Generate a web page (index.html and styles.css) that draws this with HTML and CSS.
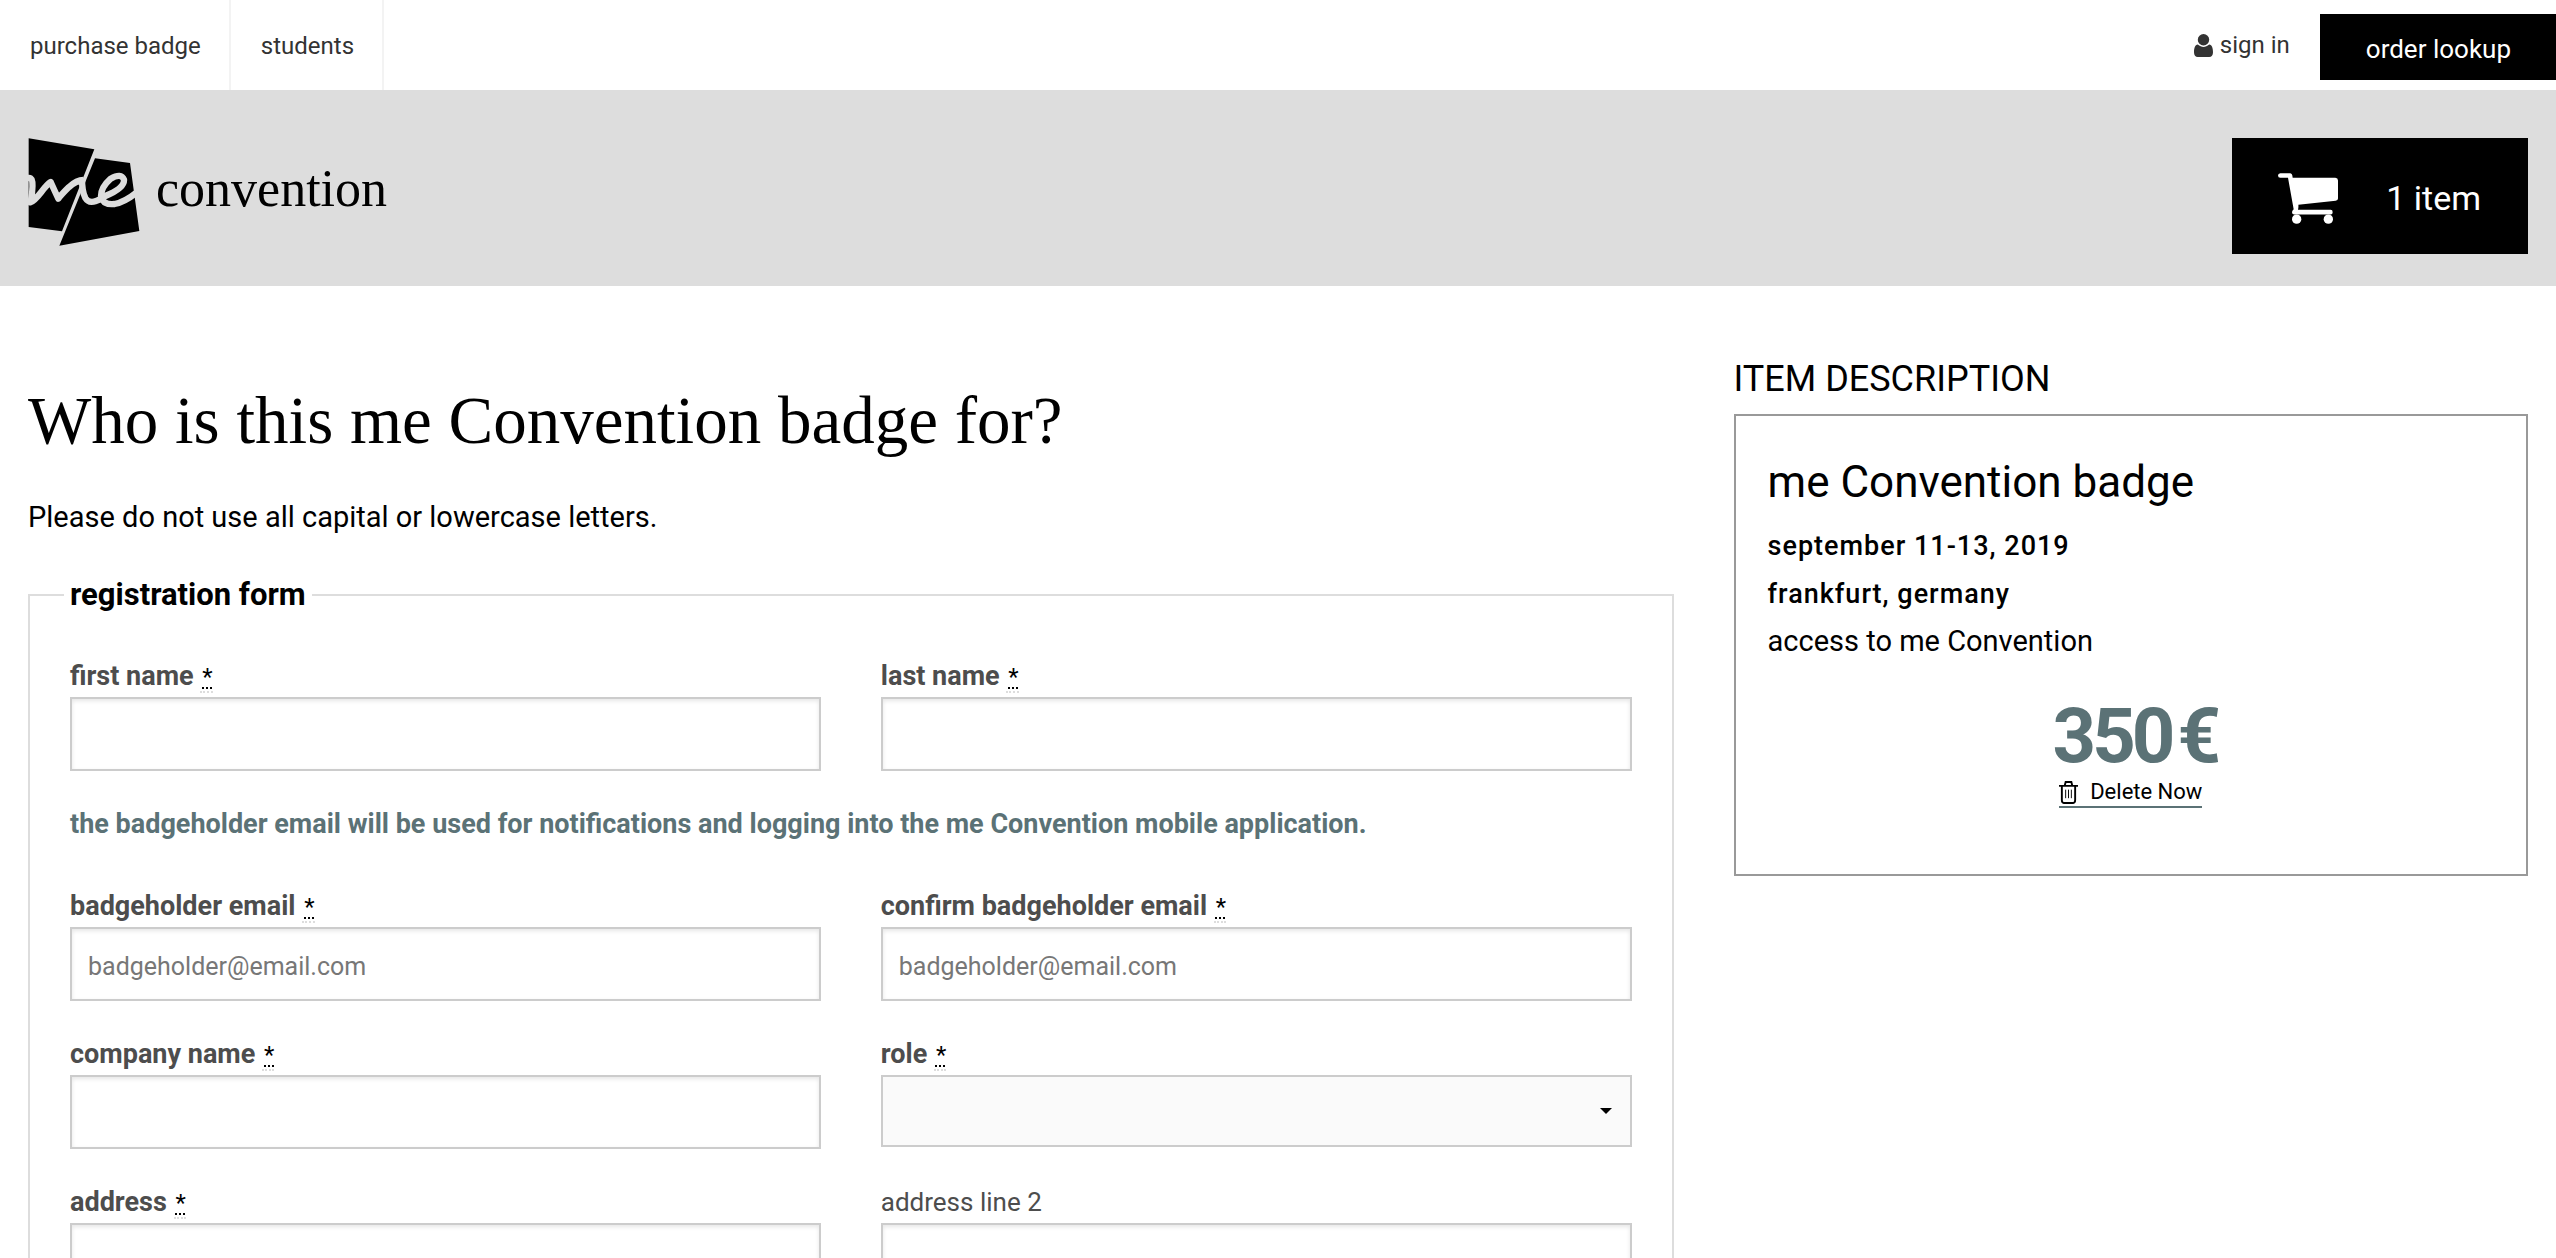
FILE: index.html
```html
<!DOCTYPE html>
<html lang="en">
<head>
<meta charset="utf-8">
<meta name="viewport" content="width=device-width, initial-scale=1">
<title>me Convention registration</title>
<link rel="stylesheet" href="styles.css">
</head>
<body>
<nav class="topbar">
  <div class="topbar-links">
    <a class="topbar-link" href="#">purchase badge</a>
    <a class="topbar-link" href="#">students</a>
  </div>
  <div class="topbar-account">
    <a class="sign-in" href="#">
      <svg class="user-icon" viewBox="0 0 20 24" aria-hidden="true"><circle cx="10" cy="6" r="6"/><path d="M4 11C8 14.500 12 14.500 16 11C19 11.500 20 15 20 19C20 22 18.500 24 16 24H4C1.500 24 0 22 0 19C0 15 1 11.500 4 11Z"/></svg>
      sign in</a>
    <a class="order-lookup" href="#">order lookup</a>
  </div>
</nav>
<header class="masthead">
  <a class="brand" href="#">
    <svg class="brand-mark" viewBox="0 0 336 324" role="img" aria-label="me">
      <path d="M2 1L199 34L102 280L2 267Z M201 61L306 75L334 279L94 323Z"/>
      <path class="brand-script" d="M-4 121Q12 116 13 132Q15 165 7 193Q20 188 40 162Q58 138 68 132Q76 150 91 182Q98 172 122 148Q146 126 166 126M162 122Q162 160 172 180Q182 197 204 189Q220 184 232 174Q290 150 288 125Q280 104 248 122Q219 148 219 174Q224 202 260 198Q290 192 324 165"/>
    </svg>
    <span class="brand-name">convention</span>
  </a>
  <a class="cart" href="#">
    <svg class="cart-icon" viewBox="0 0 180 152" aria-hidden="true"><path d="M7 0H37Q42 1 43 7L44 14H172Q180 15 180 22V76Q180 82 173 83L61 95Q62 100 60 110H158Q164 110 164 117Q164 124 158 124H49Q42 124 42 117Q42 112 47 108L30 14H7Q0 14 0 7Q0 1 7 0Z"/><circle cx="56" cy="138" r="14"/><circle cx="151" cy="138" r="14"/></svg>
    <span>1 item</span>
  </a>
</header>
<div class="layout">
  <main>
    <h1>Who is this me Convention badge for?</h1>
    <p class="intro">Please do not use all capital or lowercase letters.</p>
    <form>
      <fieldset class="registration">
        <legend>registration form</legend>
        <div class="field">
          <label for="first">first name <abbr title="required">*</abbr></label>
          <input id="first" type="text">
        </div>
        <div class="field">
          <label for="last">last name <abbr title="required">*</abbr></label>
          <input id="last" type="text">
        </div>
        <p class="notice">the badgeholder email will be used for notifications and logging into the me Convention mobile application.</p>
        <div class="field">
          <label for="email">badgeholder email <abbr title="required">*</abbr></label>
          <input id="email" type="email" placeholder="badgeholder@email.com">
        </div>
        <div class="field">
          <label for="confirm">confirm badgeholder email <abbr title="required">*</abbr></label>
          <input id="confirm" type="email" placeholder="badgeholder@email.com">
        </div>
        <div class="field">
          <label for="company">company name <abbr title="required">*</abbr></label>
          <input id="company" type="text">
        </div>
        <div class="field">
          <label for="role">role <abbr title="required">*</abbr></label>
          <select id="role"><option></option></select>
        </div>
        <div class="field">
          <label for="address">address <abbr title="required">*</abbr></label>
          <input id="address" type="text">
        </div>
        <div class="field">
          <label class="optional" for="address2">address line 2</label>
          <input id="address2" type="text">
        </div>
      </fieldset>
    </form>
  </main>
  <aside>
    <h2>ITEM DESCRIPTION</h2>
    <section class="item">
      <h3>me Convention badge</h3>
      <p class="item-meta">september 11-13, 2019</p>
      <p class="item-meta">frankfurt, germany</p>
      <p class="item-access">access to me Convention</p>
      <div class="item-total">
        <p class="price">350<span class="currency">€</span></p>
        <button class="delete" type="button">
          <svg class="trash-icon" viewBox="0 0 20 24" aria-hidden="true"><path d="M0 5H20M6 5L7 1H13L14 5M3 5V20Q3 23 5 23H15Q17 23 17 20V5"/><path class="trash-bars" d="M7 9V18M10 9V18M13 9V18"/></svg>
          Delete Now</button>
      </div>
    </section>
  </aside>
</div>
</body>
</html>
```
FILE: styles.css
```css
* { box-sizing: border-box; }

body {
  margin: 0;
  background: #fff;
  color: #000;
  font-family: Roboto, "Liberation Sans", sans-serif;
  font-size: 27px;
}

h1, h2, h3, p { margin: 0; }
a { color: inherit; text-decoration: none; }

.topbar {
  display: flex;
  justify-content: space-between;
  height: 90px;
  color: #333;
  font-size: 24px;
}

.topbar-links, .topbar-account { display: flex; }

.topbar-link {
  padding: 0 28px 0 30px;
  border-right: 2px solid #f3f3f3;
  line-height: 92px;
}

.sign-in {
  display: flex;
  align-items: center;
  gap: 7px;
  padding: 0 30px;
}

.user-icon { width: 19px; height: 23px; fill: #333; }

.order-lookup {
  margin: 14px 0 10px;
  padding: 0 45px 0 46px;
  background: #000;
  color: #fff;
  font-size: 26px;
  line-height: 70px;
  height: 66px;
}

.masthead {
  display: flex;
  justify-content: space-between;
  align-items: flex-start;
  height: 196px;
  padding: 48px 28px;
  background: #ddd;
}

.brand { display: flex; gap: 16px; }
.brand-mark { width: 112px; height: 108px; }

.brand-script {
  fill: none;
  stroke: #ddd;
  stroke-width: 19px;
  stroke-linejoin: round;
}

.brand-name {
  font-family: "Liberation Serif", serif;
  font-size: 52px;
  line-height: 102px;
}

.cart {
  display: flex;
  align-items: center;
  gap: 48px;
  height: 116px;
  padding: 4px 47px 0 46px;
  background: #000;
  color: #fff;
  font-size: 34px;
}

.cart-icon { width: 60px; height: 51px; fill: #fff; }

.layout {
  display: grid;
  grid-template-columns: 29fr 14fr;
  gap: 60px;
  padding: 0 28px;
}

h1 {
  margin-top: 84px;
  font-family: "Liberation Serif", serif;
  font-size: 67px;
  font-weight: 400;
  line-height: 100px;
}

.intro {
  margin-top: 27px;
  font-size: 29px;
  line-height: 40px;
}

.registration {
  display: grid;
  grid-template-columns: 1fr 1fr;
  column-gap: 60px;
  row-gap: 32px;
  margin: 38px 0 60px;
  padding: 40px 40px 60px;
  border: 2px solid #ddd;
}

legend {
  margin-left: -6px;
  padding: 0 6px;
  font-size: 31px;
  font-weight: 700;
  line-height: 40px;
}

.field { display: flex; flex-direction: column; }

label {
  color: #4d4d4d;
  font-weight: 700;
  line-height: 42px;
}

label.optional { font-size: 26px; font-weight: 400; }

abbr {
  padding-left: 2px;
  border-bottom: 2px dotted #ddd;
  color: #000;
  font-size: 24px;
  font-weight: 400;
  line-height: 1;
  text-decoration: underline dotted 2px;
  text-underline-offset: 2px;
}

input, select {
  width: 100%;
  height: 74px;
  padding: 4px 16px 0;
  border: 2px solid #ccc;
  border-radius: 0;
  background: #fff;
  box-shadow: inset 0 2px 4px rgba(0, 0, 0, .1);
  font: inherit;
  font-size: 25px;
}

input::placeholder { color: #777; }

select {
  height: 72px;
  appearance: none;
  background: #fafafa url("data:image/svg+xml,%3Csvg xmlns='http://www.w3.org/2000/svg' width='12' height='6'%3E%3Cpath d='M0 0H12L6 6Z'/%3E%3C/svg%3E") no-repeat right 18px center;
  box-shadow: none;
}

.notice {
  grid-column: 1 / -1;
  margin-bottom: 8px;
  color: #5b7276;
  font-weight: 700;
  line-height: 42px;
}

h2 {
  margin-top: 68px;
  font-size: 36px;
  font-weight: 400;
  line-height: 50px;
}

.item {
  margin-top: 10px;
  padding: 38px 32px 66px;
  border: 2px solid #999;
}

h3 {
  font-size: 44px;
  font-weight: 400;
  line-height: 56px;
  margin-bottom: 12px;
}

.item-meta {
  font-weight: 500;
  letter-spacing: 1px;
  line-height: 48px;
}

.item-access { font-size: 29px; line-height: 46px; }

.item-total {
  display: flex;
  flex-direction: column;
  align-items: center;
}

.price {
  margin-top: 30px;
  padding-left: 8px;
  color: #5b7276;
  font-size: 76px;
  font-weight: 700;
  letter-spacing: -4px;
  line-height: 84px;
}

.currency { margin-left: 6px; }

.delete {
  display: flex;
  align-items: center;
  gap: 12px;
  padding: 0;
  border: 0;
  border-bottom: 2px solid #5b7276;
  background: none;
  color: #000;
  font: inherit;
  font-size: 22px;
  line-height: 28px;
}

.trash-icon { width: 19px; height: 23px; fill: none; stroke: #000; stroke-width: 2px; }
.trash-bars { stroke-width: 1px; }
```
